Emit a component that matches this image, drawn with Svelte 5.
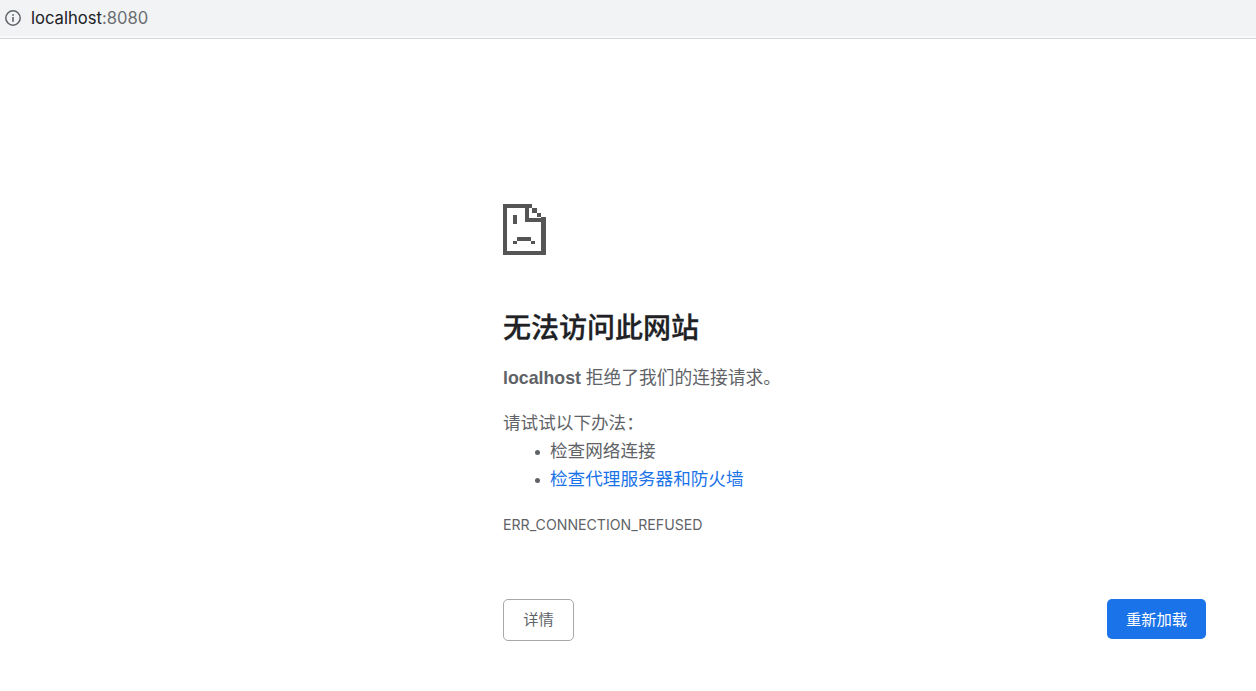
<script>
  const host = 'localhost'
  const port = ':8080'
</script>

<style>
:global(body) {
    margin: 0;
    background: #fff;
    font-family: "Liberation Sans", "Noto Sans CJK SC", sans-serif;
}

.page {
    height: 691px;
    overflow: hidden;
    display: flex;
    flex-direction: column;
}

.bar {
    height: 36px;
    background: #f1f3f4;
    display: flex;
    align-items: center;
    padding-left: 5px;
    gap: 10px;
    font-family: Inter, "Liberation Sans", sans-serif;
    font-size: 16.6px;
    color: #202124;
    flex-shrink: 0;
}

.bar svg {
    display: block;
}

.port {
    color: #6a6d70;
}

.rule {
    height: 2px;
    background: #fafafa;
    border-bottom: 1px solid #d6d6d6;
    flex-shrink: 0;
}

.main {
    margin-left: 503px;
    width: 703px;
    padding-top: 165px;
    color: #5f6368;
    font-size: 17.6px;
}

.icon {
    display: block;
    width: 43px;
    height: 51px;
}

h1 {
    margin: 56px 0 0;
    font-size: 28px;
    line-height: 36px;
    font-weight: 500;
    -webkit-text-stroke: 0.3px #202124;
    color: #202124;
}

.lead {
    margin: 17px 0 0;
    font-size: 17.75px;
    line-height: 28px;
}

.lead b {
    font-weight: 700;
}

.try {
    margin: 17px 0 0;
    line-height: 28px;
}

ul {
    margin: 0;
    padding: 0 0 0 47px;
    line-height: 28px;
    list-style: none;
}

li {
    position: relative;
}

li::before {
    content: "";
    position: absolute;
    left: -15px;
    top: 13px;
    width: 5px;
    height: 5px;
    border-radius: 50%;
    background: #5f6368;
}

a {
    color: #1a73e8;
    text-decoration: none;
}

.code {
    margin: 23px 0 0;
    font-family: Inter, "Liberation Sans", sans-serif;
    font-size: 14.15px;
    line-height: 18px;
    color: #5f6368;
}

.actions {
    margin-top: 65px;
    display: flex;
    justify-content: space-between;
    align-items: flex-start;
}

button {
    font-family: inherit;
    font-size: 15.3px;
    border-radius: 5px;
    cursor: pointer;
}

.details {
    width: 71px;
    height: 42px;
    padding-bottom: 5px;
    background: #fff;
    border: 1px solid #a8a8a8;
    color: #5f6368;
}

.reload {
    width: 99px;
    height: 40px;
    padding-bottom: 4px;
    background: #1a73e8;
    border: none;
    color: #fff;
}
</style>

<div class="page">
    <div class="bar">
        <svg width="16" height="16" viewBox="0 0 16 16" fill="none">
            <circle cx="8" cy="8" r="7.2" stroke="#5f6368" stroke-width="1.5" />
            <rect x="7.2" y="7" width="1.6" height="4.8" fill="#5f6368" />
            <rect x="7.2" y="4.2" width="1.6" height="1.6" fill="#5f6368" />
        </svg>
        <span>{host}<span class="port">{port}</span></span>
    </div>
    <div class="rule"></div>

    <div class="main">
        <svg class="icon" viewBox="0 0 43 51" shape-rendering="crispEdges" fill="#555">
            <path d="M0 0h29v4H4v43h34V13h5v38H0z" />
            <path d="M22 0h4v14h17v4H22z" />
            <rect x="29" y="4" width="5" height="5" />
            <rect x="34" y="9" width="4" height="4" />
            <rect x="10" y="11" width="4" height="9" />
            <rect x="14" y="33" width="14" height="4" />
            <rect x="10" y="37" width="4" height="3" />
            <rect x="28" y="37" width="4" height="3" />
        </svg>

        <h1>无法访问此网站</h1>
        <p class="lead"><b>{host}</b> 拒绝了我们的连接请求。</p>
        <p class="try">请试试以下办法：</p>
        <ul>
            <li>检查网络连接</li>
            <li><a href="#top">检查代理服务器和防火墙</a></li>
        </ul>
        <p class="code">ERR_CONNECTION_REFUSED</p>

        <div class="actions">
            <button class="details">详情</button>
            <button class="reload">重新加载</button>
        </div>
    </div>
</div>
